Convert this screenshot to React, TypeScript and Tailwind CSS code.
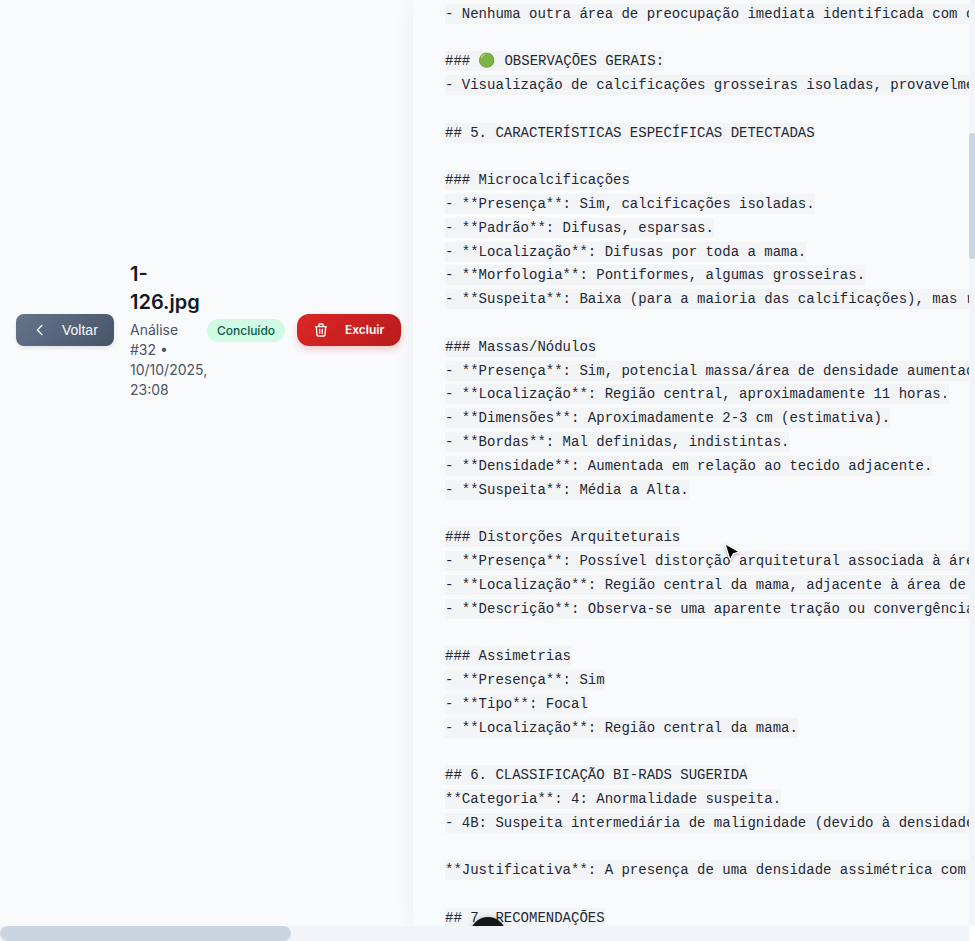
const report = [
  "- Nenhuma outra área de preocupação imediata identificada com clareza.",
  "",
  "### 🟢 OBSERVAÇÕES GERAIS:",
  "- Visualização de calcificações grosseiras isoladas, provavelmente benignas.",
  "",
  "## 5. CARACTERÍSTICAS ESPECÍFICAS DETECTADAS",
  "",
  "### Microcalcificações",
  "- **Presença**: Sim, calcificações isoladas.",
  "- **Padrão**: Difusas, esparsas.",
  "- **Localização**: Difusas por toda a mama.",
  "- **Morfologia**: Pontiformes, algumas grosseiras.",
  "- **Suspeita**: Baixa (para a maioria das calcificações), mas requer atenção.",
  "",
  "### Massas/Nódulos",
  "- **Presença**: Sim, potencial massa/área de densidade aumentada.",
  "- **Localização**: Região central, aproximadamente 11 horas.",
  "- **Dimensões**: Aproximadamente 2-3 cm (estimativa).",
  "- **Bordas**: Mal definidas, indistintas.",
  "- **Densidade**: Aumentada em relação ao tecido adjacente.",
  "- **Suspeita**: Média a Alta.",
  "",
  "### Distorções Arquiteturais",
  "- **Presença**: Possível distorção arquitetural associada à área de densidade.",
  "- **Localização**: Região central da mama, adjacente à área de densidade.",
  "- **Descrição**: Observa-se uma aparente tração ou convergência.",
  "",
  "### Assimetrias",
  "- **Presença**: Sim",
  "- **Tipo**: Focal",
  "- **Localização**: Região central da mama.",
  "",
  "## 6. CLASSIFICAÇÃO BI-RADS SUGERIDA",
  "**Categoria**: 4: Anormalidade suspeita.",
  "- 4B: Suspeita intermediária de malignidade (devido à densidade).",
  "",
  "**Justificativa**: A presença de uma densidade assimétrica com distorção.",
  "",
  "## 7. RECOMENDAÇÕES",
].join("\n");

function Header() {
  return (
    <header className="flex w-[413px] shrink-0 items-center pl-4">
      <button className="flex h-8 w-[98px] shrink-0 items-center rounded-lg bg-linear-135 from-[#64748b] to-[#475569] pl-4 font-['Liberation_Sans',Arial,sans-serif] text-sm text-[#f8fafc] shadow-[0_2px_4px_rgba(0,0,0,0.1)]">
        <svg className="mr-[14px] size-4" viewBox="0 0 24 24" fill="none" stroke="currentColor" strokeWidth="2" strokeLinecap="round" strokeLinejoin="round">
          <path d="M15 19l-7-7 7-7" />
        </svg>
        Voltar
      </button>
      <div className="ml-4 w-[77px] shrink-0">
        <h1 className="mb-1 text-xl font-semibold text-[#111827]">1-<br />126.jpg</h1>
        <p className="text-sm text-[#4b5563]">Análise<br />#32 •<br />10/10/2025,<br />23:08</p>
      </div>
      <span className="flex h-[23px] w-[78px] shrink-0 items-center justify-center rounded-full bg-[#d1fae5] pt-px text-xs font-medium text-[#065f46]">
        Concluído
      </span>
      <button className="ml-3 flex h-8 w-[104px] shrink-0 items-center rounded-xl bg-linear-135 from-[#dc2626] to-[#b91c1c] pl-4 text-xs font-semibold text-white shadow-[0_4px_6px_rgba(220,38,38,0.2)]">
        <svg className="mr-4 size-4" viewBox="0 0 24 24" fill="none" stroke="currentColor" strokeWidth="2" strokeLinecap="round" strokeLinejoin="round">
          <path d="M19 7l-.867 12.142A2 2 0 0116.138 21H7.862a2 2 0 01-1.995-1.858L5 7m5 4v6m4-6v6m1-10V4a1 1 0 00-1-1h-4a1 1 0 00-1 1v3M4 7h16" />
        </svg>
        Excluir
      </button>
    </header>
  );
}

export default function App() {
  return (
    <div className="relative flex h-[941px] w-[975px] flex-col overflow-hidden bg-white font-['Inter',sans-serif]">
      <div className="flex h-[926px] shrink-0">
        <div className="relative flex w-[969px] shrink-0 overflow-hidden bg-[#f9fafc]">
          <div className="flex h-[660px] shrink-0">
            <Header />
          </div>
          <main className="h-[926px] min-w-0 flex-1 overflow-hidden bg-[#f9fafc] pt-[2.6px] pl-8 shadow-[0_0_20px_rgba(0,0,0,0.06)]">
            <pre className="font-['Liberation_Mono','Noto_Color_Emoji',monospace] text-sm leading-[23.8px] text-[#1f2937]">
              <code className="bg-[#f3f4f6] py-0.5 font-['Liberation_Mono','Noto_Color_Emoji',monospace]">{report}</code>
            </pre>
          </main>
          <div className="absolute top-[917px] left-[470px] size-9 rounded-full bg-[#171717] shadow-[0_0_6px_rgba(0,0,0,0.2)]" />
        </div>
        <div className="w-1.5 shrink-0 bg-[#f1f5f9] pt-[133px]">
          <div className="h-[126px] rounded-[3px] bg-[#cbd5e1]" />
        </div>
      </div>
      <div className="h-[15px] w-[969px] bg-[#f1f5f9]">
        <div className="h-full w-[291px] rounded-lg bg-[#cbd5e1]" />
      </div>
      <svg className="absolute top-[542px] left-[723px] h-[21px] w-[19px] drop-shadow-[0_1px_1px_rgba(0,0,0,0.35)]" viewBox="0 0 19 21">
        <path d="M3 3L15 9.7L10 11.3L7.2 16.6Z" fill="#000" stroke="#fff" strokeWidth="2.6" strokeLinejoin="round" paintOrder="stroke" />
      </svg>
    </div>
  );
}
